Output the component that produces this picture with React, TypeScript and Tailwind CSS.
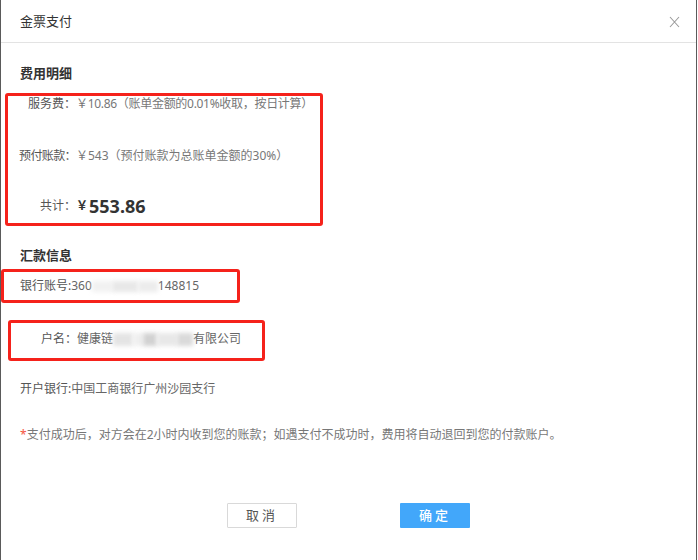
export default function App() {
  const font = { fontFamily: '"Noto Sans", "Noto Sans CJK SC", sans-serif' };

  return (
    <div className="w-[698px] h-[560px] bg-white" style={font}>
      <div className="w-[697px] h-[560px] border-x border-[#5a5a5a] bg-white flex flex-col">
        <div className="h-[43px] shrink-0 flex items-center justify-between pl-[19px] pr-[16px] border-b border-[#e3e3e3]">
          <span className="text-[13px] text-[#333] mt-[1px]">金票支付</span>
          <svg width="11" height="12" viewBox="0 0 11 12" className="mt-[2px]">
            <path d="M1 1 L10 11 M10 1 L1 11" stroke="#9a9a9a" strokeWidth="1.1" fill="none" />
          </svg>
        </div>

        <div className="pt-[21px] pl-[19px] text-[13px] leading-[18px] font-bold text-[#333]">费用明细</div>

        <div className="mt-[11px] ml-[4px] w-[318px] h-[133px] border-[3px] border-[#f5221b] rounded-[3px] flex flex-col text-[12px] leading-[16px]">
          <div className="flex">
            <span className="w-[68px] text-right text-[#555]">服务费：</span>
            <span className="text-[#777] tracking-[-0.3px]">￥10.86（账单金额的0.01%收取，按日计算）</span>
          </div>
          <div className="flex mt-[36px]">
            <span className="w-[68px] text-right text-[#555] tracking-[-0.6px]">预付账款：</span>
            <span className="text-[#777]">￥543（预付账款为总账单金额的30%）</span>
          </div>
          <div className="flex items-center mt-[30px] h-[24px]">
            <span className="w-[68px] text-right text-[#555]">共计：</span>
            <span className="text-[#333] text-[12px] font-bold">￥</span>
            <span className="text-[#333] text-[18px] font-bold ml-[1px]">553.86</span>
          </div>
        </div>

        <div className="mt-[20px] pl-[19px] text-[13px] leading-[18px] font-bold text-[#333]">汇款信息</div>

        <div className="mt-[5px] w-[239px] h-[34px] border-[3px] border-[#f5221b] rounded-[3px] flex items-center pl-[16px] text-[12px] leading-[16px] text-[#666]">
          <span className="text-[#555]">银行账号:</span>
          <span>360</span>
          <span className="inline-flex w-[66px] h-[12px] items-center">
            <span className="w-[20px] h-[11px] bg-[#f1f1f1] blur-[2px]"></span>
            <span className="w-[26px] h-[11px] bg-[#e8e8e8] blur-[2px]"></span>
            <span className="w-[20px] h-[11px] bg-[#ececec] blur-[2px]"></span>
          </span>
          <span>148815</span>
        </div>

        <div className="mt-[17px] ml-[7px] w-[257px] h-[41px] border-[3px] border-[#f5221b] rounded-[3px] flex items-start pt-[8px] text-[12px] leading-[16px] text-[#666]">
          <span className="w-[66px] text-right text-[#555]">户名：</span>
          <span>健康链</span>
          <span className="inline-flex w-[80px] h-[16px] items-center">
            <span className="w-[20px] h-[13px] bg-[#e4e4e4] blur-[2px]"></span>
            <span className="w-[10px] h-[13px] bg-[#efefef] blur-[2px]"></span>
            <span className="w-[14px] h-[13px] bg-[#d2d2d2] blur-[2px]"></span>
            <span className="w-[20px] h-[13px] bg-[#e8e8e8] blur-[2px]"></span>
            <span className="w-[16px] h-[13px] bg-[#dadada] blur-[2px]"></span>
          </span>
          <span>有限公司</span>
        </div>

        <div className="mt-[20px] pl-[19px] text-[12px] leading-[16px] text-[#666]">
          <span className="text-[#555]">开户银行:</span>中国工商银行广州沙园支行
        </div>

        <div className="mt-[30px] pl-[19px] text-[12px] leading-[16px] text-[#777]">
          <span className="text-[#f5533d]">*</span>支付成功后，对方会在2小时内收到您的账款；如遇支付不成功时，费用将自动退回到您的付款账户。
        </div>

        <div className="mt-[60px] flex justify-center gap-[103px]">
          <button className="w-[70px] h-[25px] border border-[#d9d9d9] bg-white text-[13px] text-[#555] tracking-[3px] rounded-[1px]">
            取消
          </button>
          <button className="w-[70px] h-[25px] bg-[#42a7fa] text-[13px] text-white tracking-[3px] rounded-[1px] font-medium">
            确定
          </button>
        </div>
      </div>
    </div>
  );
}
